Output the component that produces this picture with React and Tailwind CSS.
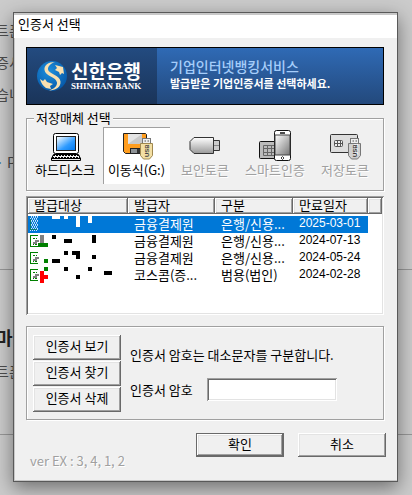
import React, { useState } from 'react'

const bevel = 'bg-[#f0f0f0] shadow-[inset_-1px_-1px_#696969,inset_1px_1px_#fff,inset_-2px_-2px_#a0a0a0,inset_2px_2px_#e3e3e3]'
const etched = 'border border-[#a0a0a0] shadow-[1px_1px_#fff,inset_1px_1px_#fff]'
const sunken = 'bg-white shadow-[inset_1px_1px_#a0a0a0,inset_-1px_-1px_#fff,inset_2px_2px_#696969,inset_-2px_-2px_#e3e3e3]'

const HardDiskIcon = () => (
  <svg className="w-[34px] h-8" viewBox="0 0 34 32">
    <defs>
      <linearGradient id="screen" x1="0" y1="0" x2="1" y2="1">
        <stop offset="0.1" stopColor="#e4f3ff" />
        <stop offset="0.6" stopColor="#2f9bff" />
        <stop offset="1" stopColor="#0078ee" />
      </linearGradient>
    </defs>
    <rect x="5.5" y="3.5" width="25" height="20" rx="2" fill="#fff" stroke="#000" />
    <rect x="8.5" y="6.5" width="19" height="14" fill="url(#screen)" stroke="#222" />
    <path d="M5 25.5h26M4 27.5h28" stroke="#000" strokeDasharray="2 1" shapeRendering="crispEdges" />
    <path d="M5.5 24.5h25l2 4v2h-29v-2z" fill="none" stroke="#000" />
    <path d="M3 28.5h30" stroke="#000" shapeRendering="crispEdges" />
  </svg>
)

const UsbStick = ({ body, edge, ink }) => (
  <g>
    <rect x="22.5" y="8.5" width="8" height="6" fill="#eee" stroke="#777" />
    <path d="M24.5 11h1.5M27.5 11h1.5" stroke="#555" />
    <path d="M20.5 13.5h12v12l-3 3.5h-6l-3-3.5z" fill={body} stroke={edge} />
    <text transform="translate(29 27) rotate(-90)" fontSize="6" fontWeight="700" fontFamily="Liberation Sans, sans-serif" fill={ink}>USB</text>
  </g>
)

const RemovableIcon = () => (
  <svg className="w-[34px] h-8" viewBox="0 0 34 32">
    <path d="M3.5 3.5h22l1 1v19h-21l-2-2z" fill="#ff9d1e" stroke="#222" />
    <rect x="8" y="4" width="14" height="10" fill="#e4e4e4" />
    <path d="M8 14L22 4v10z" fill="#c9c9c9" />
    <rect x="10.5" y="18.5" width="10" height="5" fill="#8d9296" stroke="#222" />
    <rect x="17" y="19" width="3" height="4" fill="#333" />
    <UsbStick body="#f3dfa4" edge="#a08850" ink="#444" />
  </svg>
)

const TokenIcon = () => (
  <svg className="w-[34px] h-8" viewBox="0 0 34 32">
    <defs>
      <linearGradient id="token" x1="0" y1="0" x2="0" y2="1">
        <stop offset="0" stopColor="#fff" />
        <stop offset="1" stopColor="#999" />
      </linearGradient>
    </defs>
    <path d="M25.5 10.5h6v10h-6z" fill="#ccc" stroke="#333" />
    <path d="M26 15.5h5" stroke="#888" />
    <path d="M6 7.5h19.5v16H6l-4-4v-8z" fill="url(#token)" stroke="#333" />
  </svg>
)

const SmartIcon = () => (
  <svg className="w-[34px] h-8" viewBox="0 0 34 32">
    <defs>
      <linearGradient id="glass" x1="0" y1="0" x2="1" y2="1">
        <stop offset="0" stopColor="#fff" />
        <stop offset="1" stopColor="#777" />
      </linearGradient>
    </defs>
    <rect x="1.5" y="11.5" width="18" height="17" rx="1" fill="#bbb" stroke="#111" />
    <path d="M5.5 15.5h12v10h-12zM5.5 18.5h12M5.5 22.5h12M9.5 15.5v10M13.5 15.5v10" fill="none" stroke="#666" />
    <rect x="16.5" y="0.5" width="16" height="30" rx="2" fill="#fff" stroke="#111" />
    <rect x="17" y="5" width="15" height="20" fill="url(#glass)" stroke="#444" />
    <path d="M22 3h5" stroke="#111" strokeWidth="1.5" />
    <path d="M24.5 26.5l1.5 1.5-1.5 1.5-1.5-1.5z" fill="none" stroke="#111" strokeWidth="0.8" />
  </svg>
)

const StorageTokenIcon = () => (
  <svg className="w-[34px] h-8" viewBox="0 0 34 32">
    <rect x="2.5" y="4.5" width="27" height="18" rx="1" fill="#ddd" stroke="#333" />
    <rect x="6.5" y="10.5" width="8" height="6" rx="1" fill="#eee" stroke="#555" />
    <path d="M6 13.5h9M9.5 10v7M12.5 10v7" stroke="#555" />
    <UsbStick body="#d0d0d0" edge="#777" ink="#333" />
  </svg>
)

const media = [
  { name: '하드디스크', icon: <HardDiskIcon /> },
  { name: '이동식(G:)', icon: <RemovableIcon /> },
  { name: '보안토큰', icon: <TokenIcon />, disabled: true },
  { name: '스마트인증', icon: <SmartIcon />, disabled: true },
  { name: '저장토큰', icon: <StorageTokenIcon />, disabled: true },
]

// blocks are the masked owner names: [x, y, width, height, color]
const certs = [
  {
    issuer: '금융결제원', type: '은행/신용...', expires: '2025-03-01',
    blocks: [[22, 0, 8, 3, '#fff'], [34, 0, 4, 3, '#fff'], [46, 0, 4, 11, '#fff'], [58, 0, 4, 7, '#fff']],
  },
  {
    issuer: '금융결제원', type: '은행/신용...', expires: '2024-07-13',
    blocks: [[10, 2, 4, 8, '#808080'], [8, 10, 10, 4, '#008000'], [22, 2, 4, 4, '#000'], [34, 6, 8, 4, '#000'], [62, 2, 4, 8, '#000']],
  },
  {
    issuer: '금융결제원', type: '은행/신용...', expires: '2024-05-24',
    blocks: [[14, 9, 4, 4, '#008000'], [22, 9, 8, 4, '#000'], [34, 1, 4, 4, '#000'], [42, 1, 8, 4, '#000'], [46, 5, 4, 4, '#000'], [62, 5, 4, 4, '#000']],
  },
  {
    issuer: '코스콤(증...', type: '범용(법인)', expires: '2024-02-28',
    blocks: [[14, 0, 4, 4, '#008000'], [10, 4, 4, 12, '#f00'], [14, 8, 4, 4, '#f00'], [34, 0, 4, 4, '#000'], [58, 0, 4, 4, '#000'], [46, 8, 4, 4, '#000'], [74, 4, 8, 4, '#000']],
  },
]

const Owner = ({ blocks, selected }) => (
  <svg className="block w-[94px] h-[17px]" viewBox="0 0 94 17" shapeRendering="crispEdges">
    {selected ? (
      <g>
        <path d="M1 .5h7M0 2.5h8M1 4.5h7M0 6.5h8M1 8.5h7M0 10.5h8M1 12.5h7M0 14.5h8" stroke="#cfe6fa" strokeDasharray="1 1" />
        <path d="M1 1.5h7M0 3.5h8M1 5.5h7M0 7.5h8M1 9.5h7M0 11.5h8M1 13.5h7" stroke="#9fcdf3" strokeDasharray="1 1" />
        <path d="M.5 3v10M0 13.5h7" stroke="#0a7a70" />
      </g>
    ) : (
      <g>
        <path d="M8 2.5H.5v11H8" fill="none" stroke="#008000" />
        <path d="M3 5.5h2M6 5.5h1M3 11.5h1M5 11.5h2" stroke="#008000" />
        <path d="M3 9.5h3v-2h3" fill="none" stroke="#808080" strokeWidth="2" />
      </g>
    )}
    {blocks.map(([x, y, w, h, fill], i) => (
      <rect key={i} x={x} y={y} width={w} height={h} fill={fill} />
    ))}
  </svg>
)

const ShinhanMark = () => (
  <svg className="w-[30px] h-[30px] shrink-0" viewBox="0 0 30 30">
    <defs>
      <radialGradient id="globe" cx="0.4" cy="0.35" r="0.7">
        <stop offset="0" stopColor="#1e8fdd" />
        <stop offset="1" stopColor="#0557a8" />
      </radialGradient>
    </defs>
    <circle cx="15" cy="15" r="15" fill="url(#globe)" />
    <path d="M18 1C11 1 7 4.500 7.500 9C8 15 19.500 16 20 21.500C20.300 25 17 28 12 29.500C19 29.500 24 26 23.500 20.500C23 14 11.500 13 11 8.500C10.800 5 14 2.500 18 1z" fill="#f8dfb0" />
    <path d="M18 4l8 2 1 7-2-1-2 2-1-3-4-2 2-2z" fill="#f8dfb0" />
    <path d="M3 18l3 2 2-2 2 3 6 2-3 2 1 3-5-1c-3-2-5-5-6-9z" fill="#f8dfb0" />
  </svg>
)

const PageBehind = () => (
  <div aria-hidden="true" className="[grid-area:1/1] overflow-hidden whitespace-nowrap bg-[#cbcbcb] text-sm leading-5 text-[#4d4d4d]">
    <div className="h-[270px] border-b border-[#979797] pt-5">
      <div className="-ml-1 space-y-3">
        <p>트폰</p>
        <p>증서</p>
        <p>습니</p>
        <p className="pt-9"><span className="text-[#4779a8]">·</span> P</p>
      </div>
    </div>
    <div className="h-[165px] border-b border-[#979797] pt-[55px]">
      <div className="-ml-1">
        <p className="text-lg font-bold leading-6 text-[#222]">마</p>
        <p className="pt-3 text-sm">트폰</p>
      </div>
    </div>
  </div>
)

const App = () => {
  const [medium, setMedium] = useState(1)
  const [selected, setSelected] = useState(0)
  const [password, setPassword] = useState('')

  return (
    <div className="grid min-h-screen font-['Noto_Sans_CJK_KR',sans-serif] text-[13px] leading-4 text-black">
      <PageBehind />

      <div role="dialog" aria-labelledby="title" className="relative [grid-area:1/1] self-start mt-3 mb-[13px] ml-[13px] mr-3.5 border border-[#595959] bg-[#f0f0f0] shadow-[0_6px_18px_rgba(0,0,0,0.45),inset_1px_-1px_#c8c8c8]">
        <h1 id="title" className="h-[25px] border-t-2 border-[#c8c8c8] bg-white pl-1 leading-[18px]">인증서 선택</h1>

        <div className="pt-[9px] pl-3 pr-[13px] pb-3">
          {/* Bank banner */}
          <div className="flex h-[58px] border border-black bg-linear-to-b from-[#2f6ab5] to-[#23497c]">
            <div className="flex w-[130px] shrink-0 items-center gap-1 bg-linear-to-b from-[#234b80] to-[#1a3459] pl-2.5 text-white">
              <ShinhanMark />
              <div className="whitespace-nowrap">
                <p className="text-[19px] font-bold leading-5">신한은행</p>
                <p className="font-['Liberation_Serif',serif] text-[9px] font-bold leading-[10px]">SHINHAN BANK</p>
              </div>
            </div>
            <div className="flex flex-col justify-center whitespace-nowrap pb-1 pl-[13px]">
              <p className="text-sm font-medium leading-[18px] text-[#a5cdfa]">기업인터넷뱅킹서비스</p>
              <p className="text-[11px] font-bold leading-4 text-white">발급받은 기업인증서를 선택하세요.</p>
            </div>
          </div>

          {/* Storage media */}
          <fieldset className={`mt-1.5 px-[3px] pb-1.5 ${etched}`}>
            <legend className="ml-1 bg-[#f0f0f0] px-0.5 leading-[14px]">저장매체 선택</legend>
            <div className="grid grid-cols-5 pt-0.5">
              {media.map((m, i) => (
                <button
                  key={m.name}
                  type="button"
                  disabled={m.disabled}
                  aria-pressed={medium === i}
                  onClick={() => setMedium(i)}
                  className={`flex h-[57px] flex-col items-center whitespace-nowrap pt-[3px] leading-4 disabled:text-[#a0a0a0] disabled:[text-shadow:1px_1px_#fff] ${medium === i ? 'ml-[3px] bg-white shadow-[inset_1px_1px_#a0a0a0]' : ''}`}
                >
                  {m.icon}
                  {m.name}
                </button>
              ))}
            </div>
          </fieldset>

          {/* Certificate list */}
          <div className={`mt-[5px] h-[119px] overflow-hidden p-0.5 ${sunken}`}>
            <table className="w-full table-fixed border-collapse whitespace-nowrap text-left">
              <colgroup>
                <col className="w-[100px]" />
                <col className="w-[87px]" />
                <col className="w-[78px]" />
                <col className="w-[75px]" />
                <col />
              </colgroup>
              <thead>
                <tr>
                  {['발급대상', '발급자', '구분', '만료일자', ''].map((h) => (
                    <th key={h} className="h-[18px] p-0 align-top font-normal">
                      <div className={`h-4 pl-1.5 leading-[14px] ${bevel}`}>{h}</div>
                    </th>
                  ))}
                </tr>
              </thead>
              <tbody>
                {certs.map((c, i) => {
                  const cell = `h-[17px] p-0 align-top leading-[15px] ${selected === i ? 'bg-[#0078d7] text-white' : ''}`
                  return (
                    <tr key={c.expires} onClick={() => setSelected(i)}>
                      <td className={`${cell} pl-0.5`}><Owner blocks={c.blocks} selected={selected === i} /></td>
                      <td className={`${cell} pl-1.5`}>{c.issuer}</td>
                      <td className={`${cell} pl-1.5`}>{c.type}</td>
                      <td className={`${cell} pl-1.5 font-['Liberation_Sans',sans-serif] text-xs`}>{c.expires}</td>
                      <td />
                    </tr>
                  )
                })}
              </tbody>
            </table>
          </div>

          {/* Certificate tools and password */}
          <div className={`mt-[11px] flex h-[94px] gap-[9px] pl-1.5 pt-2 ${etched}`}>
            <div className="flex flex-col gap-px">
              {['인증서 보기', '인증서 찾기', '인증서 삭제'].map((label) => (
                <button key={label} type="button" className={`h-[25px] w-[88px] pb-1 ${bevel}`}>{label}</button>
              ))}
            </div>
            <div className="whitespace-nowrap pt-3">
              <p>인증서 암호는 대소문자를 구분합니다.</p>
              <div className="flex items-center gap-3.5 pt-[15px]">
                <label htmlFor="password">인증서 암호</label>
                <input
                  id="password"
                  type="password"
                  value={password}
                  onChange={(e) => setPassword(e.target.value)}
                  className={`h-[23px] w-[130px] px-1 outline-none ${sunken}`}
                />
              </div>
            </div>
          </div>

          <div className="mt-[13px] -mr-0.5 flex h-9 items-start gap-3.5">
            <p className="flex-1 self-end whitespace-nowrap pl-1 text-[#a0a0a0] [text-shadow:1px_1px_#fff]">ver EX : 3, 4, 1, 2</p>
            <button type="submit" className={`h-6 w-[88px] border border-[#696969] pb-0.5 ${bevel}`}>확인</button>
            <button type="button" className={`h-6 w-[88px] pb-0.5 ${bevel}`}>취소</button>
          </div>
        </div>
      </div>
    </div>
  )
}

export default App
